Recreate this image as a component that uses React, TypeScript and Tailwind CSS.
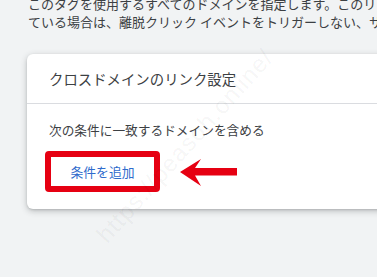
const jp = "font-['Noto_Sans_CJK_JP','Noto_Sans',sans-serif]";

function ArrowLeft() {
  return (
    <svg width="58" height="30" viewBox="0 0 58 30" className="mt-[7px] shrink-0">
      <polygon points="0,14 21,1 15,10 57,10 57,17.5 15,17.5 21,28" fill="#e60012" />
    </svg>
  );
}

export default function App() {
  return (
    <div className={`relative h-[277px] w-[377px] overflow-hidden bg-[#f1f3f4] ${jp}`}>
      <p className="mt-[-5px] whitespace-nowrap pl-[28px] text-[13px] leading-[18px] text-[#3c4043]">
        このタグを使用するすべてのドメインを指定します。このリスト
        <br />
        ている場合は、離脱クリック イベントをトリガーしない、サイト
      </p>

      <div className="ml-[27px] mt-[23px] w-[400px] rounded-[6px] bg-white shadow-[0_2px_6px_rgba(60,64,67,0.3),0_1px_2px_rgba(60,64,67,0.15)]">
        <div className="flex h-[50px] items-center border-b border-[#dadce0] pl-[22px] text-[14.4px] text-[#3c4043]">
          クロスドメインのリンク設定
        </div>
        <div className="pb-[17px] pl-[22px] pt-[17px]">
          <p className="text-[12.7px] leading-[18px] text-[#3c4043]">次の条件に一致するドメインを含める</p>
          <div className="mt-[12px] flex items-start gap-[20px]">
            <div className="ml-[-4px] flex h-[41px] w-[115px] items-center justify-center rounded-[4px] border-[6px] border-[#e60012] bg-white">
              <span className="text-[12.8px] text-[#2f6bcc]">条件を追加</span>
            </div>
            <ArrowLeft />
          </div>
        </div>
      </div>

      <span className="pointer-events-none absolute left-[60px] top-[128px] origin-center -rotate-[48deg] whitespace-nowrap font-['Liberation_Sans',sans-serif] text-[24px] tracking-[1px] text-[#000000]/[0.05]">
        https://peasoh.online/
      </span>
    </div>
  );
}
